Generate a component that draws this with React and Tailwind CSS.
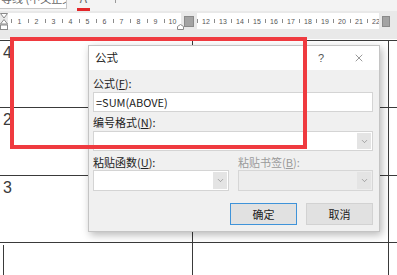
import { ChevronDown, X } from "lucide-react";

const cjk = "font-['Noto_Sans_CJK_SC','Microsoft_YaHei',sans-serif]";

function Hourglass() {
  return (
    <svg width="8" height="17" viewBox="0 0 8 17" className="shrink-0">
      <path d="M0.5 0.5 H7.5 L4 5 Z" fill="#fff" stroke="#8a8a8a" strokeWidth="1" />
      <path d="M4 6.5 L7.5 11 H0.5 Z" fill="#fff" stroke="#8a8a8a" strokeWidth="1" />
      <rect x="0.5" y="12" width="7" height="4.5" fill="#fff" stroke="#8a8a8a" strokeWidth="1" />
    </svg>
  );
}

function RulerCell({ n }) {
  return (
    <div className="flex w-[17px] shrink-0 items-center">
      <span className="h-[4px] w-px bg-[#8c8c8c]" />
      <span className="flex-1 text-center text-[7px] leading-none text-[#555]">{n}</span>
    </div>
  );
}

function Ruler() {
  const left = [1, 2, 3, 4, 5, 6, 7, 8, 9, 10];
  const right = [12, 13, 14, 15, 16, 17, 18, 19, 20, 21, 22];
  return (
    <div className="h-[28px] bg-[#e9e9e9] pt-[2px] font-['Liberation_Sans',Arial,sans-serif]">
      <div className="flex h-[16px]">
        <Hourglass />
        <div className="relative flex w-[173px] shrink-0 bg-white pl-[2.5px]">
          {left.map((n) => (
            <RulerCell key={n} n={n} />
          ))}
          <svg width="7" height="6" viewBox="0 0 7 6" className="absolute -right-[3px] bottom-[-1px]">
            <path d="M0.5 5.5 V2.5 L3.5 0.5 L6.5 2.5 V5.5 Z" fill="#fff" stroke="#8a8a8a" />
          </svg>
        </div>
        <div className="flex w-[16px] shrink-0 items-center justify-center">
          <div className="h-[11px] w-[10px] border border-[#8a8a8a] bg-[#a3a3a3]" />
        </div>
        <div className="flex w-[182px] shrink-0 overflow-hidden bg-white">
          {right.map((n) => (
            <RulerCell key={n} n={n} />
          ))}
        </div>
        <div className="flex w-[14px] shrink-0 items-center justify-center">
          <div className="h-[11px] w-[8px] border border-[#8a8a8a] bg-[#a3a3a3]" />
        </div>
      </div>
    </div>
  );
}

function Toolbar() {
  return (
    <div className={`flex h-[11px] items-start bg-[#f3f3f3] ${cjk}`}>
      <div className="h-[9px] w-[67px] overflow-hidden border-r border-b border-[#c6c6c6] bg-white pl-[1px]">
        <div className="-mt-[9px] whitespace-nowrap text-[11px] leading-[14px] text-[#666]">等线 (中文正文)</div>
      </div>
      <div className="ml-[10px] flex h-[11px] w-[13px] flex-col">
        <div className="h-[8px] overflow-hidden text-center">
          <div className="-mt-[9px] text-[12px] leading-[14px] text-[#666]">A</div>
        </div>
        <div className="h-[3px] bg-[#e3262a]" />
      </div>
      <div className="ml-[25px] h-[3px] w-px bg-[#999]" />
    </div>
  );
}

function Select({ disabled, className = "" }) {
  return (
    <div
      className={`flex border ${disabled ? "border-[#d6d6d6] bg-[#ededed]" : "border-[#d4d4d4] bg-white"} ${className}`}
    >
      <div className="flex-1" />
      <div className="my-px mr-px flex w-[14px] items-center justify-center bg-[#e4e4e4]">
        <ChevronDown size={9} strokeWidth={1.4} color="#6a6a6a" />
      </div>
    </div>
  );
}

function FormulaDialog() {
  return (
    <div
      className={`absolute left-[88px] top-[45px] flex h-[187px] w-[292px] flex-col border border-[#c4c4c4] bg-[#f0f0f0] shadow-[2px_3px_8px_rgba(0,0,0,0.28)] ${cjk} text-[#222]`}
    >
      <div className="flex h-[24px] items-center bg-white pl-[6px] pr-[14px] text-[11.5px]">
        <span>公式</span>
        <span className="ml-auto mr-[29px] font-['Liberation_Sans',sans-serif] text-[11px] text-[#555]">?</span>
        <X size={12} strokeWidth={1.1} color="#444" />
      </div>
      <div className="flex flex-1 flex-col pl-[4px] pr-[6px] text-[11px]">
        <div className="mt-[7px] h-[12px] leading-[12px]">公式(<span className="underline">F</span>):</div>
        <div className="mt-[3px] flex h-[20px] items-center border border-[#d4d4d4] bg-white pl-[2px] leading-none">
          =SUM(ABOVE)
        </div>
        <div className="mt-[4px] h-[12px] leading-[12px]">编号格式(<span className="underline">N</span>):</div>
        <Select className="mt-[3px] h-[20px]" />
        <div className="mt-[5px] flex h-[12px] gap-[9px] leading-[12px]">
          <div className="w-[136px]">粘贴函数(<span className="underline">U</span>):</div>
          <div className="flex-1 text-[#9a9a9a]">粘贴书签(<span className="underline">B</span>):</div>
        </div>
        <div className="mt-[2px] flex h-[21px] gap-[9px]">
          <Select className="w-[136px]" />
          <Select disabled className="flex-1" />
        </div>
        <div className="mt-[12px] flex h-[22px] justify-end gap-[9px]">
          <button className="w-[67px] border border-[#3f93d9] bg-[#e1e1e1] text-[11px] text-[#222]">确定</button>
          <button className="w-[67px] border border-[#d2d2d2] bg-[#e1e1e1] text-[11px] text-[#222]">取消</button>
        </div>
      </div>
    </div>
  );
}

function Row({ label, className = "" }) {
  return (
    <div className={`grid grid-cols-[192px_196px_1fr] border-t border-[#3a3a3a] ${className}`}>
      <div className="pl-[3px] pt-[3px] text-[16px] leading-[17px] text-[#3a3a3a]">{label}</div>
      <div className="border-l border-[#3a3a3a]" />
      <div className="border-l border-[#3a3a3a]" />
    </div>
  );
}

export default function App() {
  return (
    <div className="relative flex h-[275px] w-[397px] flex-col overflow-hidden bg-white">
      <Toolbar />
      <Ruler />
      <div className="flex flex-1 flex-col bg-white pt-px font-['Liberation_Sans',Arial,sans-serif]">
        <Row label="4" className="h-[67px]" />
        <Row label="2" className="h-[68px]" />
        <Row label="3" className="h-[67px]" />
        <div className="grid flex-1 grid-cols-[192px_196px_1fr] border-t border-[#3a3a3a]">
          <div className="pl-[3px] pt-[2px]">
            <div className="h-full border-l border-[#3a3a3a]" />
          </div>
          <div className="border-l border-[#3a3a3a]" />
          <div className="border-l border-[#3a3a3a]" />
        </div>
      </div>
      <FormulaDialog />
      <div className="absolute left-[10px] top-[37px] h-[112px] w-[297px] border-[4px] border-[#ef3a3f]" />
    </div>
  );
}
